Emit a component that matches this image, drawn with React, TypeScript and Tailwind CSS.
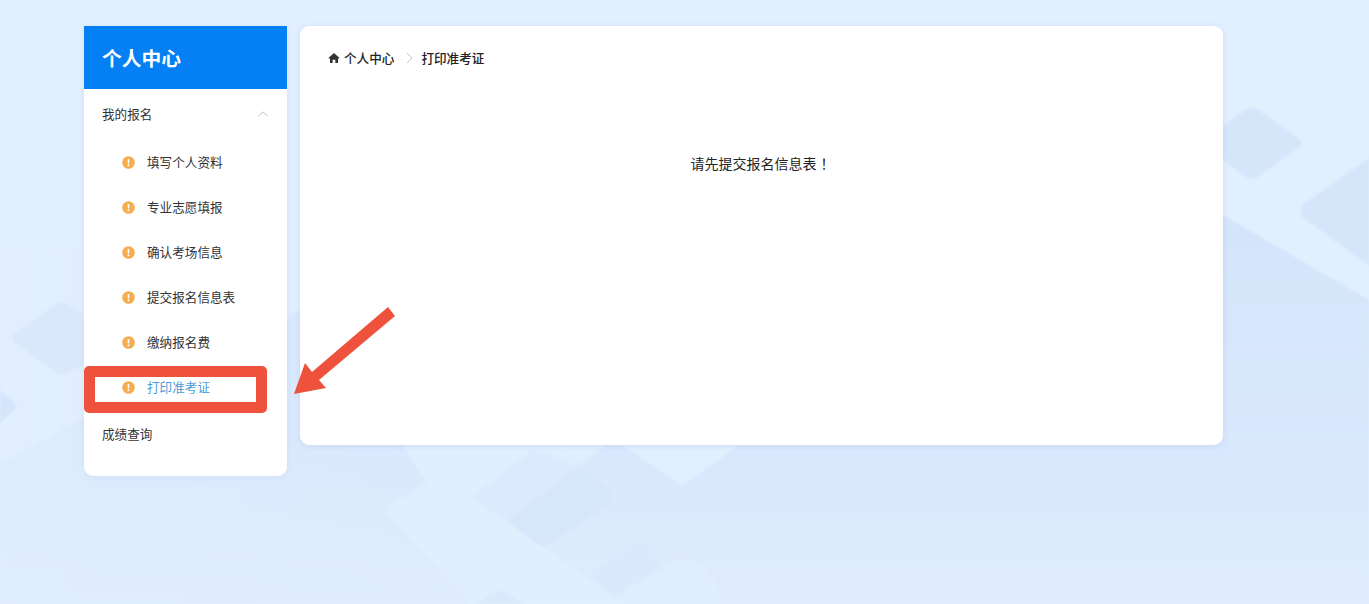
const steps = ["填写个人资料", "专业志愿填报", "确认考场信息", "提交报名信息表", "缴纳报名费", "打印准考证"];

function WarnIcon() {
    return (
        <svg width="13" height="13" viewBox="0 0 13 13" className="shrink-0">
            <circle cx="6.5" cy="6.5" r="6.3" fill="#f6ad4f" />
            <rect x="5.7" y="2.9" width="1.6" height="4.6" rx="0.7" fill="#fff" />
            <circle cx="6.5" cy="9.2" r="0.95" fill="#fff" />
        </svg>
    );
}

function Background() {
    return (
        <svg className="absolute inset-0" width="1369" height="604" viewBox="0 0 1369 604">
            <defs>
                <linearGradient id="lower" gradientUnits="userSpaceOnUse" x1="0" y1="215" x2="0" y2="604">
                    <stop offset="0" stopColor="#d4e5fb" />
                    <stop offset="0.6" stopColor="#d9e8fd" />
                    <stop offset="1" stopColor="#e0ecfc" />
                </linearGradient>
                <linearGradient id="fade" gradientUnits="userSpaceOnUse" x1="0" y1="0" x2="500" y2="0">
                    <stop offset="0" stopColor="#e1eefe" stopOpacity="0.6" />
                    <stop offset="1" stopColor="#e1eefe" stopOpacity="0" />
                </linearGradient>
            </defs>
            <rect width="1369" height="604" fill="#e2effe" />
            <g className="blur-[1px]">
                {/* lower dark band */}
                <path d="M1223 215 L1369 300 V604 H0 V463 L84 418 L420 250 Z" fill="url(#lower)" />
                <rect x="0" y="250" width="500" height="354" fill="url(#fade)" />
                {/* right diamonds */}
                <path d="M1245 110 Q1252 105 1259 110 L1298 138 Q1305 143 1298 148 L1259 176 Q1252 181 1245 176 L1200 143 Z" fill="#d5e6fb" />
                <path d="M1369 158 L1305 203 Q1295 211 1305 219 L1369 266 Z" fill="#d5e6fb" />
                {/* left diamonds */}
                <path d="M15 333 L56 304 Q62 300 68 304 L90 318 V362 L68 373 Q62 377 56 373 L15 343 Q8 338 15 333 Z" fill="#dbe8fb" />
                <path d="M0 390 L13 401 Q18 406 13 411 L0 423 Z" fill="#d5e5fb" />
                {/* bottom shapes */}
                <path d="M389 506 L427 483 L403 445 H557 L580 466 L508 520 L613 597 L630 604 H470 L387 513 Z" fill="#e1eefe" />
                <path d="M557 445 L580 465 L607 445 Z" fill="#e1eefe" />
                <path d="M623 445 L682 485 L740 445 Z" fill="#e2effe" />
                <path d="M472 497 L533 450 L580 466 L612 493 L543 547 Z" fill="#dde9fd" />
                <path d="M512 517 L574 471 Q580 467 586 471 L608 489 Q613 494 612 502 L549 544 Q543 548 537 544 L512 525 Q506 521 512 517 Z" fill="#d6e6fb" />
                <path d="M613 597 L665 567 L640 540 L590 575 Z" fill="#dbe9fd" />
                <path d="M613 597 L663 567 Q683 553 703 567 L717 580 V604 H625 Z" fill="#e0edfd" />
                <path d="M477 604 L492 592 Q498 589 504 592 L524 604 Z" fill="#dbe9fc" />
            </g>
        </svg>
    );
}

export default function App() {
    return (
        <div className="relative h-[604px] w-full overflow-hidden font-['Noto_Sans_CJK_SC','Noto_Sans',sans-serif] text-[#333]">
            <Background />
            <div className="relative flex items-start gap-[13px] pl-[84px] pt-[26px]">
                <aside className="h-[450px] w-[203px] overflow-hidden rounded-b-[9px] bg-white shadow-[0_1px_6px_rgba(110,150,210,0.12)]">
                    <h2 className="flex h-[63px] items-center bg-[#0480f4] pl-[18px] text-[19.8px] font-bold text-white">个人中心</h2>
                    <div className="flex h-[50px] items-center justify-between pl-[18px] pr-[19px] text-[12.6px]">
                        <span>我的报名</span>
                        <svg width="10" height="6" viewBox="0 0 10 6" fill="none" stroke="#b5b5b5" strokeWidth="0.9">
                            <path d="M0.5 5.3 L5 0.8 L9.5 5.3" />
                        </svg>
                    </div>
                    <ul className="mt-[1px]">
                        {steps.map((s, i) => (
                            <li key={s} className={`flex h-[45px] items-center gap-[12px] pl-[38px] text-[12.6px] ${i === 5 ? "text-[#4b9bd5]" : ""}`}>
                                <WarnIcon />
                                <span>{s}</span>
                            </li>
                        ))}
                    </ul>
                    <div className="flex h-[48px] items-center pl-[18px] text-[12.6px]">成绩查询</div>
                </aside>
                <main className="h-[419px] w-[923px] rounded-[9px] bg-white px-[28px] pt-[22px] shadow-[0_1px_6px_rgba(110,150,210,0.18)]">
                    <nav className="flex h-[20px] items-center text-[12.6px] font-medium text-[#222]">
                        <svg width="12" height="12" viewBox="0 0 12 12" fill="#333" className="mr-[4px]">
                            <path d="M6 1 L11.3 5.8 L11.3 6.6 L10 6.6 V11 H7.4 V7.8 H4.6 V11 H2 V6.6 H0.7 V5.8 Z" />
                        </svg>
                        <span>个人中心</span>
                        <svg width="7" height="12" viewBox="0 0 7 12" fill="none" stroke="#c4c4c4" strokeWidth="1" className="ml-[12px] mr-[8px]">
                            <path d="M1 1 L6 6 L1 11" />
                        </svg>
                        <span>打印准考证</span>
                    </nav>
                    <p className="mt-[85px] pr-[2px] text-center text-[14px] text-[#222]">
                        请先提交报名信息表<span className="inline-block w-[14px] pl-[4px]">！</span>
                    </p>
                </main>
            </div>
            <div className="absolute left-[84px] top-[366px] h-[47px] w-[183px] rounded-[5px] border-[11px] border-[#ef523c]" />
            <svg className="absolute left-0 top-0" width="1369" height="604" viewBox="0 0 1369 604">
                <path d="M388 307 L395 316 L319 380 L326 388 L294 394 L305 363 L312 372 Z" fill="#ef523c" />
            </svg>
        </div>
    );
}
